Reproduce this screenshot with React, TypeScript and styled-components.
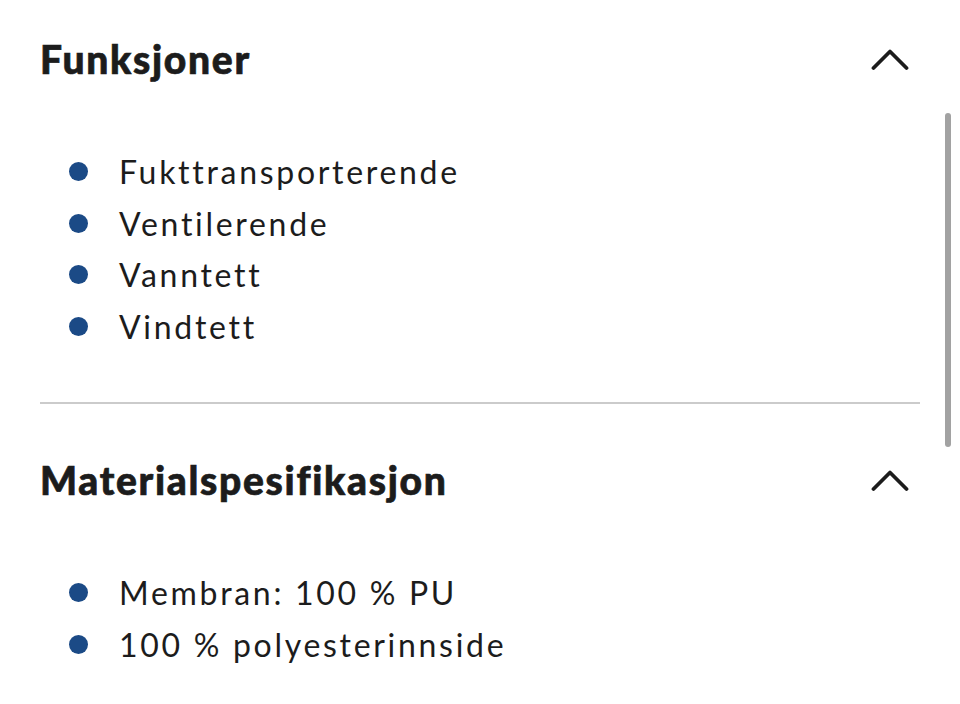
import React from "react";
import styled, { createGlobalStyle } from "styled-components";

const GlobalStyle = createGlobalStyle`
  html, body {
    margin: 0;
    padding: 0;
    background: #ffffff;
  }
  body {
    font-family: "Lato", "Noto Sans", sans-serif;
    color: #1c1c1c;
  }
`;

const Page = styled.div`
  position: relative;
  width: 960px;
  height: 704px;
  overflow: hidden;
  padding: 0 40px;
  box-sizing: border-box;
`;

const Section = styled.section`
  padding: 43px 0 50px;
  border-bottom: 2px solid #cbcbcb;

  &:first-child {
    padding-top: 26px;
  }

  &:last-child {
    border-bottom: none;
  }
`;

const Header = styled.div`
  display: flex;
  align-items: center;
  justify-content: space-between;
  height: 66px;
`;

const Title = styled.h2`
  margin: 0;
  font-size: 39px;
  font-weight: 900;
  letter-spacing: 1.7px;
  -webkit-text-stroke: 0.7px #1c1c1c;
  color: #1c1c1c;
`;

const ToggleButton = styled.button`
  display: flex;
  align-items: center;
  justify-content: center;
  border: none;
  background: none;
  padding: 0;
  margin-right: 11px;
  cursor: pointer;
`;

const List = styled.ul`
  list-style: none;
  margin: 54px 0 0;
  padding: 0;
`;

const Item = styled.li`
  display: flex;
  align-items: center;
  height: 51.5px;
  font-size: 32px;
  font-weight: 400;
  letter-spacing: 2.7px;
  color: #1c1c1c;
`;

const Dot = styled.span`
  flex: none;
  width: 19px;
  height: 19px;
  border-radius: 50%;
  background: #1b4a86;
  margin: 0 31px 0 29px;
`;

const Scrollbar = styled.div`
  position: absolute;
  top: 113px;
  right: 9px;
  width: 6px;
  height: 334px;
  border-radius: 3px;
  background: #a2a2a2;
`;

function Chevron() {
  return (
    <svg width="38" height="24" viewBox="0 0 38 24" fill="none">
      <polyline
        points="2.5,21 19,4.5 35.5,21"
        stroke="#1c1c1c"
        strokeWidth="3.8"
        strokeLinecap="round"
        strokeLinejoin="round"
      />
    </svg>
  );
}

const sections = [
  {
    title: "Funksjoner",
    items: ["Fukttransporterende", "Ventilerende", "Vanntett", "Vindtett"],
  },
  {
    title: "Materialspesifikasjon",
    items: ["Membran: 100 % PU", "100 % polyesterinnside"],
  },
];

export default function App() {
  return (
    <>
      <GlobalStyle />
      <Page>
        {sections.map((s) => (
          <Section key={s.title}>
            <Header>
              <Title>{s.title}</Title>
              <ToggleButton aria-label="Skjul">
                <Chevron />
              </ToggleButton>
            </Header>
            <List>
              {s.items.map((item) => (
                <Item key={item}>
                  <Dot />
                  {item}
                </Item>
              ))}
            </List>
          </Section>
        ))}
        <Scrollbar />
      </Page>
    </>
  );
}
